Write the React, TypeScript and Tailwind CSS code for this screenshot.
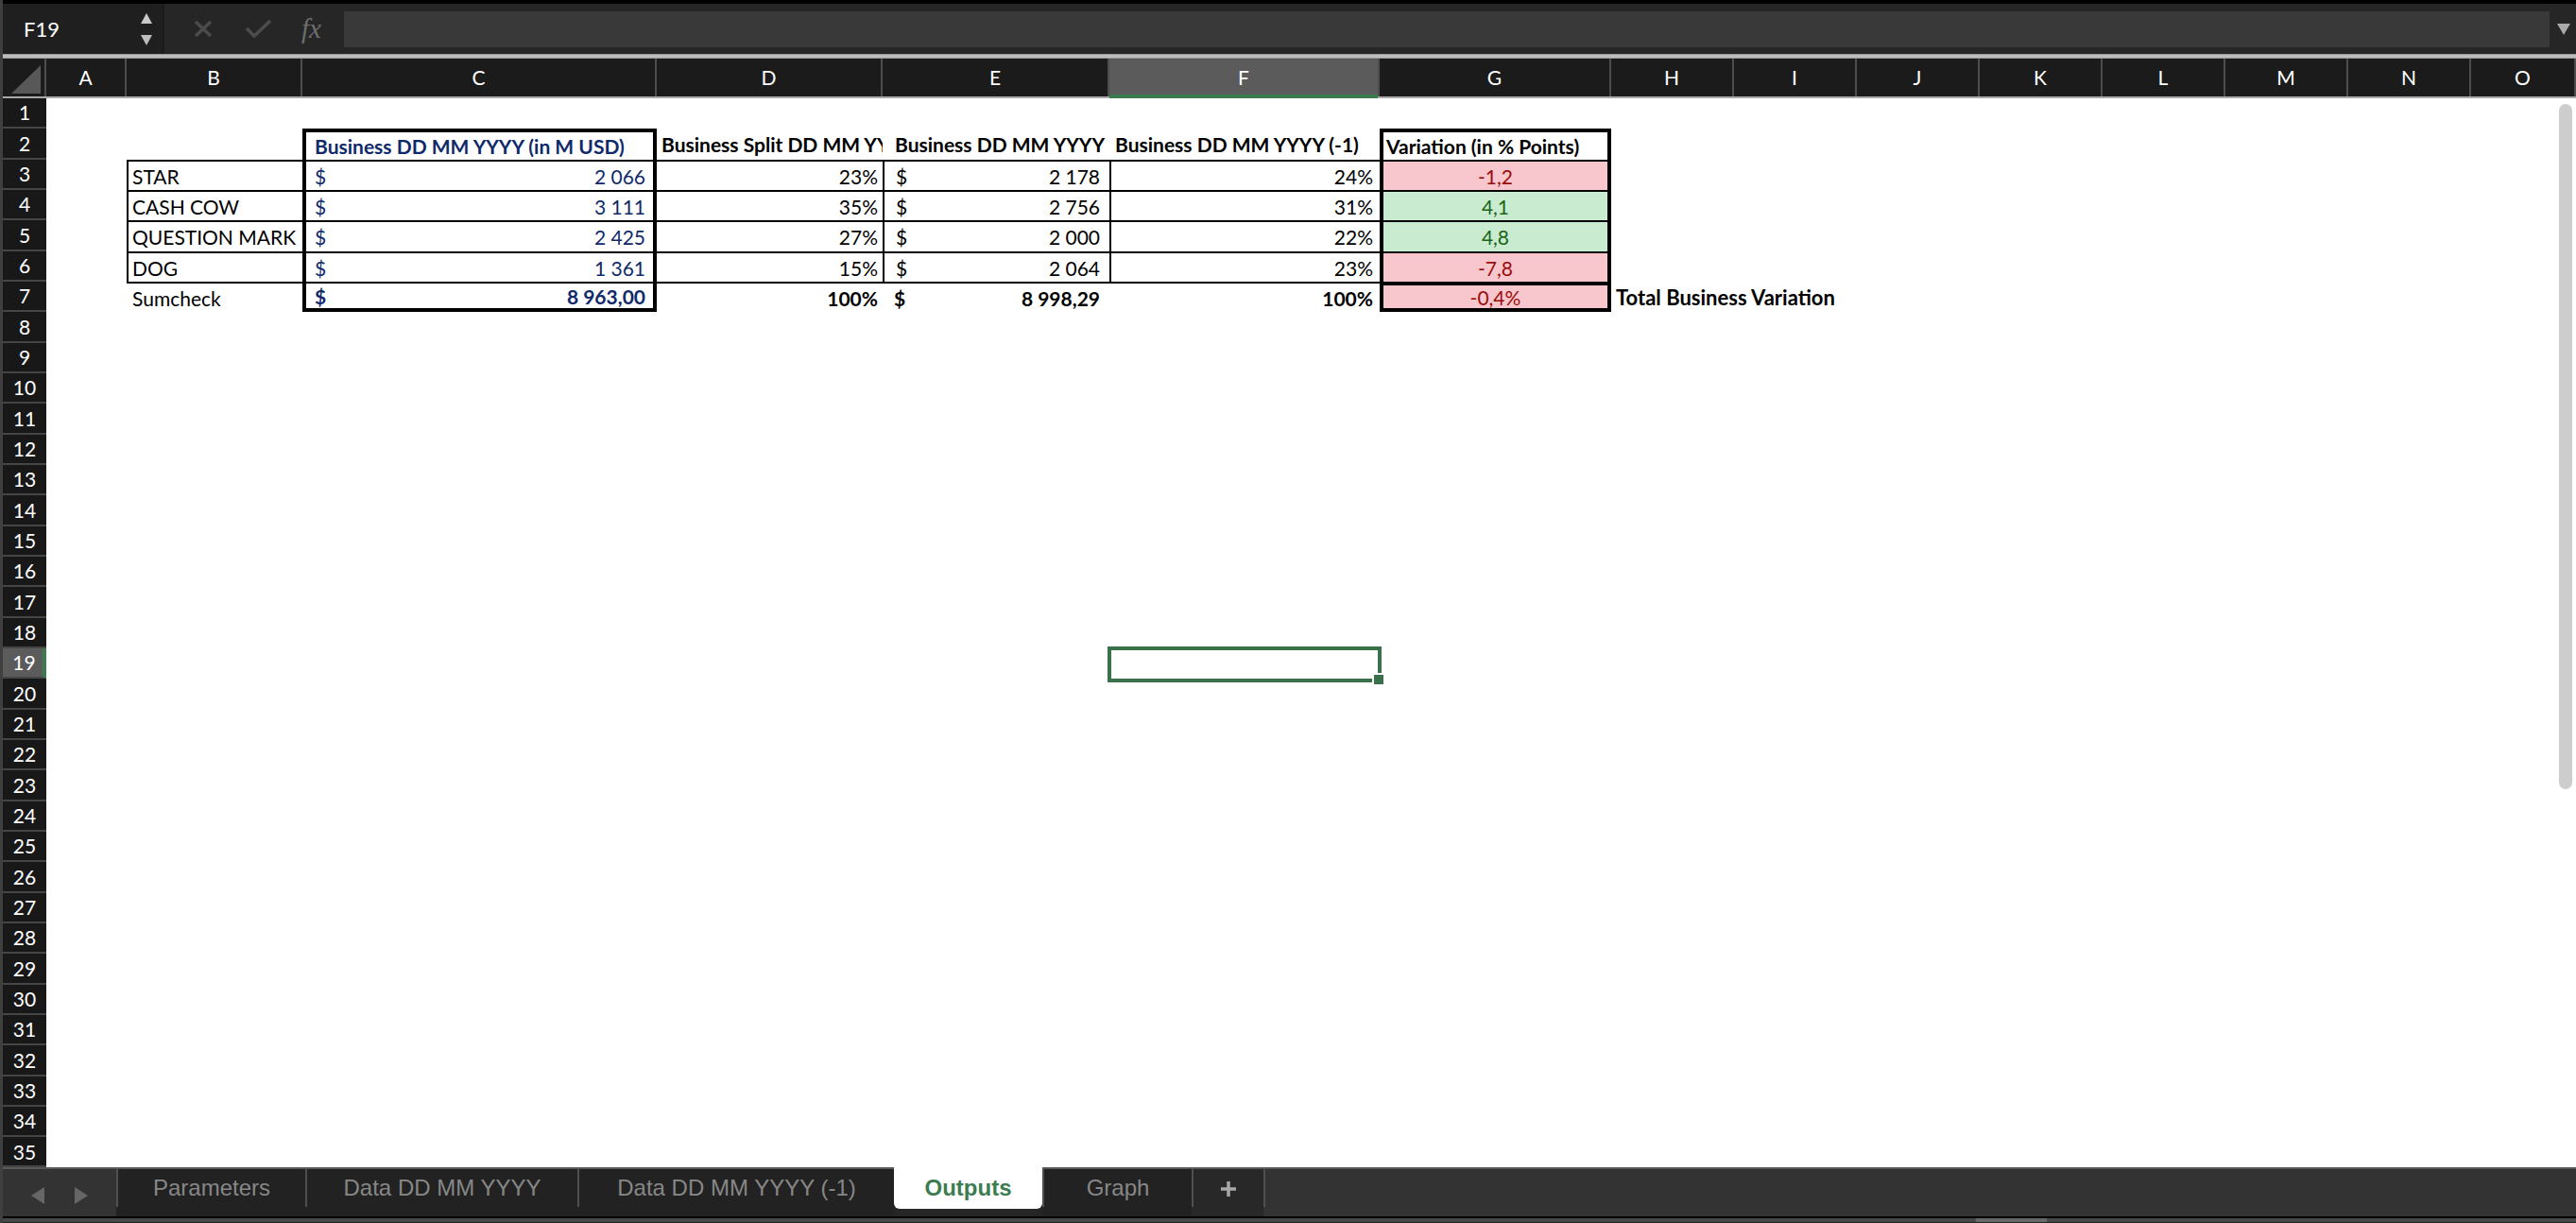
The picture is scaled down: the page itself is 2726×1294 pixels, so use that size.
import type { ReactNode } from "react";
import clsx from "clsx";

type Col = { id: string; w: string };

const cols: Col[] = [
  { id: "A", w: "w-[85px]" },
  { id: "B", w: "w-[186px]" },
  { id: "C", w: "w-[375px]" },
  { id: "D", w: "w-[239px]" },
  { id: "E", w: "w-[240px]" },
  { id: "F", w: "w-[286px]" },
  { id: "G", w: "w-[245px]" },
  { id: "H", w: "w-[130px]" },
  { id: "I", w: "w-[130px]" },
  { id: "J", w: "w-[130px]" },
  { id: "K", w: "w-[130px]" },
  { id: "L", w: "w-[130px]" },
  { id: "M", w: "w-[130px]" },
  { id: "N", w: "w-[130px]" },
  { id: "O", w: "w-[111px]" },
];

interface Line {
  label: string;
  biz: string;
  split: string;
  prev: string;
  prevSplit: string;
  variation: string;
  up: boolean;
}

const lines: Line[] = [
  { label: "STAR", biz: "2 066", split: "23%", prev: "2 178", prevSplit: "24%", variation: "-1,2", up: false },
  { label: "CASH COW", biz: "3 111", split: "35%", prev: "2 756", prevSplit: "31%", variation: "4,1", up: true },
  { label: "QUESTION MARK", biz: "2 425", split: "27%", prev: "2 000", prevSplit: "22%", variation: "4,8", up: true },
  { label: "DOG", biz: "1 361", split: "15%", prev: "2 064", prevSplit: "23%", variation: "-7,8", up: false },
];

const tabs = [
  { name: "Parameters", w: "w-[200px]" },
  { name: "Data DD MM YYYY", w: "w-[288px]" },
  { name: "Data DD MM YYYY (-1)", w: "w-[335px]" },
  { name: "Outputs", w: "w-[157px]", active: true },
  { name: "Graph", w: "w-[158px]" },
];

function Cell({ w, className, children }: { w: string; className?: string; children?: ReactNode }) {
  return (
    <div className={clsx("h-full shrink-0 flex items-center whitespace-nowrap border-black pt-[1px]", w, className)}>
      {children}
    </div>
  );
}

function Row({ n, children }: { n: number; children?: ReactNode }) {
  const sel = n === 19;
  return (
    <div className="flex h-[32.34px]">
      <div
        className={clsx(
          "w-[46px] shrink-0 flex items-center justify-center text-[21px] text-white border-b-2 border-b-[#454545]",
          sel ? "bg-[#5b5b5b] border-r-4 border-r-[#3a7a4f] pl-[3px]" : "bg-[#181818]"
        )}
      >
        {n}
      </div>
      <div className="flex flex-1 bg-white">{children}</div>
    </div>
  );
}

function FormulaBar() {
  return (
    <div className="h-[57px] flex items-center border-t-4 border-black bg-[#262626]">
      <div className="w-[171px] h-full flex items-center justify-between pl-[22px] pr-[10px] bg-[#1f1f1f] border-r-2 border-[#1a1a1a]">
        <span className="text-white text-[22px]">F19</span>
        <svg width="14" height="36" viewBox="0 0 14 36">
          <path d="M7 1 L13 12 L1 12 Z" fill="#c9c9c9" />
          <path d="M1 24 L13 24 L7 35 Z" fill="#bdbdbd" />
        </svg>
      </div>
      <svg className="ml-[31px]" width="20" height="19" viewBox="0 0 20 19">
        <path d="M2 2 L18 17 M18 2 L2 17" stroke="#4c4c4c" strokeWidth="3.5" />
      </svg>
      <svg className="ml-[34px]" width="29" height="21" viewBox="0 0 29 21">
        <path d="M2 10 L10 18 L27 2" stroke="#4c4c4c" strokeWidth="3.5" fill="none" />
      </svg>
      <span className="ml-[31px] w-[31px] font-['Liberation_Serif',serif] italic text-[29px] text-[#6e6e6e] leading-none">
        fx
      </span>
      <div className="ml-[14px] flex-1 h-[38px] bg-[#393939]" />
      <svg className="mx-[8px] mr-[6px]" width="14" height="12" viewBox="0 0 14 12">
        <path d="M0 0 L14 0 L7 12 Z" fill="#a9a9a9" />
      </svg>
    </div>
  );
}

function ColumnHeader() {
  return (
    <div className="flex h-[42px] bg-[#1b1b1b] border-b-2 border-[#a9a9a9]">
      <div className="w-[46px] shrink-0 border-r-2 border-[#4d4d4d]">
        <svg width="44" height="40" viewBox="0 0 44 40">
          <path d="M40 7 L40 37 L9 37 Z" fill="#585858" />
        </svg>
      </div>
      {cols.map((c) => (
        <div
          key={c.id}
          className={clsx(
            "relative shrink-0 flex items-center justify-center border-r-2 border-[#4d4d4d] text-white text-[21px]",
            c.w,
            c.id === "F" && "bg-[#5b5b5b]"
          )}
        >
          {c.id}
          {c.id === "F" && <span className="absolute left-0 right-0 -bottom-[2px] h-[4px] bg-[#3a7a4f]" />}
        </div>
      ))}
    </div>
  );
}

function DataRow({ n, line }: { n: number; line: Line }) {
  return (
    <Row n={n}>
      <Cell w="w-[85px]" />
      <Cell w="w-[186px]" className="border-t-2 border-l-2 pl-[4px]">
        {line.label}
      </Cell>
      <Cell w="w-[375px]" className="border-t-2 border-x-4 justify-between pl-[9px] pr-[8px] text-[#0f2a6b]">
        <span>$</span>
        <span>{line.biz}</span>
      </Cell>
      <Cell w="w-[239px]" className="border-t-2 justify-end pr-[5px]">
        {line.split}
      </Cell>
      <Cell w="w-[240px]" className="border-t-2 border-l-2 justify-between pl-[12px] pr-[10px]">
        <span>$</span>
        <span>{line.prev}</span>
      </Cell>
      <Cell w="w-[286px]" className="border-t-2 border-l-2 justify-end pr-[7px]">
        {line.prevSplit}
      </Cell>
      <Cell
        w="w-[245px]"
        className={clsx(
          "border-t-2 border-x-4 justify-center",
          line.up ? "bg-[#c9ecd0] text-[#1b6416]" : "bg-[#f7c7cd] text-[#9c0b0b]"
        )}
      >
        {line.variation}
      </Cell>
    </Row>
  );
}

function Sheet() {
  const rows: ReactNode[] = [];
  rows.push(<Row key={1} n={1} />);
  rows.push(
    <Row key={2} n={2}>
      <Cell w="w-[85px]" />
      <Cell w="w-[186px]" />
      <Cell w="w-[375px]" className="border-t-4 border-x-4 pl-[9px] font-bold text-[#0f2a6b] overflow-hidden">
        Business DD MM YYYY (in M USD)
      </Cell>
      <Cell w="w-[239px]" className="pl-[5px] font-bold overflow-hidden">
        Business Split DD MM YYYY
      </Cell>
      <Cell w="w-[240px]" className="pl-[13px] font-bold overflow-hidden">
        Business DD MM YYYY
      </Cell>
      <Cell w="w-[286px]" className="pl-[6px] font-bold overflow-hidden">
        Business DD MM YYYY (-1)
      </Cell>
      <Cell w="w-[245px]" className="border-t-4 border-x-4 pl-[3px] font-bold overflow-hidden">
        Variation (in % Points)
      </Cell>
    </Row>
  );
  lines.forEach((line, i) => rows.push(<DataRow key={3 + i} n={3 + i} line={line} />));
  rows.push(
    <Row key={7} n={7}>
      <Cell w="w-[85px]" />
      <Cell w="w-[186px]" className="border-t-2 pl-[6px]">
        Sumcheck
      </Cell>
      <Cell w="w-[375px]" className="border-t-2 border-x-4 border-b-4 justify-between pl-[9px] pr-[8px] font-bold text-[#0f2a6b]">
        <span>$</span>
        <span>8 963,00</span>
      </Cell>
      <Cell w="w-[239px]" className="border-t-2 justify-end pr-[5px] font-bold">
        100%
      </Cell>
      <Cell w="w-[240px]" className="border-t-2 justify-between pl-[12px] pr-[10px] font-bold">
        <span>$</span>
        <span>8 998,29</span>
      </Cell>
      <Cell w="w-[286px]" className="border-t-2 justify-end pr-[7px] font-bold">
        100%
      </Cell>
      <Cell w="w-[245px]" className="border-4 justify-center bg-[#f7c7cd] text-[#9c0b0b]">
        -0,4%
      </Cell>
      <Cell w="w-[130px]" className="pl-[5px] font-bold overflow-visible text-[22px]">
        Total Business Variation
      </Cell>
    </Row>
  );
  for (let n = 8; n <= 35; n++) {
    if (n === 19) {
      rows.push(
        <Row key={n} n={n}>
          <div className="w-[1125px] shrink-0" />
          <div className="relative w-[286px] h-full shrink-0">
            <div className="absolute -left-[2px] -right-[2px] -top-[2px] -bottom-[4px] border-4 border-[#38714a]" />
            <div className="absolute -right-[6px] -bottom-[8px] w-[14px] h-[14px] bg-[#38714a] border-2 border-white" />
          </div>
        </Row>
      );
    } else {
      rows.push(<Row key={n} n={n} />);
    }
  }
  return <div className="flex flex-col text-[21px] text-black">{rows}</div>;
}

function TabBar() {
  return (
    <div className="font-['Liberation_Sans',sans-serif]">
      <div className="flex h-[52px] items-start">
        <div className="w-[120px] h-full shrink-0 flex items-start justify-center gap-[32px] pt-[19px] bg-[#333] border-t-2 border-[#595959]">
          <svg width="14" height="18" viewBox="0 0 14 18">
            <path d="M14 0 L14 18 L0 9 Z" fill="#666" />
          </svg>
          <svg width="14" height="18" viewBox="0 0 14 18">
            <path d="M0 0 L14 9 L0 18 Z" fill="#666" />
          </svg>
        </div>
        {tabs.map((t) =>
          t.active ? (
            <div
              key={t.name}
              className={clsx(
                t.w,
                "shrink-0 h-[44px] flex items-center justify-center bg-white rounded-b-[6px] text-[24px] font-bold text-[#3c7c50]"
              )}
            >
              {t.name}
            </div>
          ) : (
            <div key={t.name} className={clsx(t.w, "shrink-0 h-full flex bg-[#222] border-t-2 border-[#595959]")}>
              <div className="w-[2px] h-[40px] bg-[#4f4f4f]" />
              <div className="flex-1 h-[44px] flex items-center justify-center text-[24px] text-[#878787] -mt-[2px]">
                {t.name}
              </div>
            </div>
          )
        )}
        <div className="w-[76px] shrink-0 h-full flex bg-[#282828] border-t-2 border-[#595959]">
          <div className="w-[2px] h-[40px] bg-[#4f4f4f]" />
          <div className="flex-1 h-[42px] flex items-center justify-center">
            <svg width="18" height="18" viewBox="0 0 18 18">
              <path d="M9 1 V17 M1 9 H17" stroke="#a7a7a7" strokeWidth="3.5" />
            </svg>
          </div>
        </div>
        <div className="flex-1 h-full flex bg-[#333] border-t-2 border-[#595959]">
          <div className="w-[2px] h-[40px] bg-[#4f4f4f]" />
        </div>
      </div>
      <div className="h-[2px] bg-black" />
      <div className="h-[4px] bg-[#484848] flex">
        <div className="ml-[2088px] w-[75px] h-full bg-[#686868]" />
      </div>
    </div>
  );
}

export default function App() {
  return (
    <div className="relative w-[2726px] h-[1294px] overflow-hidden bg-[#262626] border-l-[3px] border-[#3f3f3f] font-['Lato',sans-serif]">
      <FormulaBar />
      <div className="h-[5px] bg-[#bdbdbd] border-y border-[#9a9a9a]" />
      <ColumnHeader />
      <Sheet />
      <TabBar />
      <div className="absolute top-[110px] right-[4px] w-[14px] h-[725px] rounded-full bg-[#cdcdcd]" />
    </div>
  );
}
